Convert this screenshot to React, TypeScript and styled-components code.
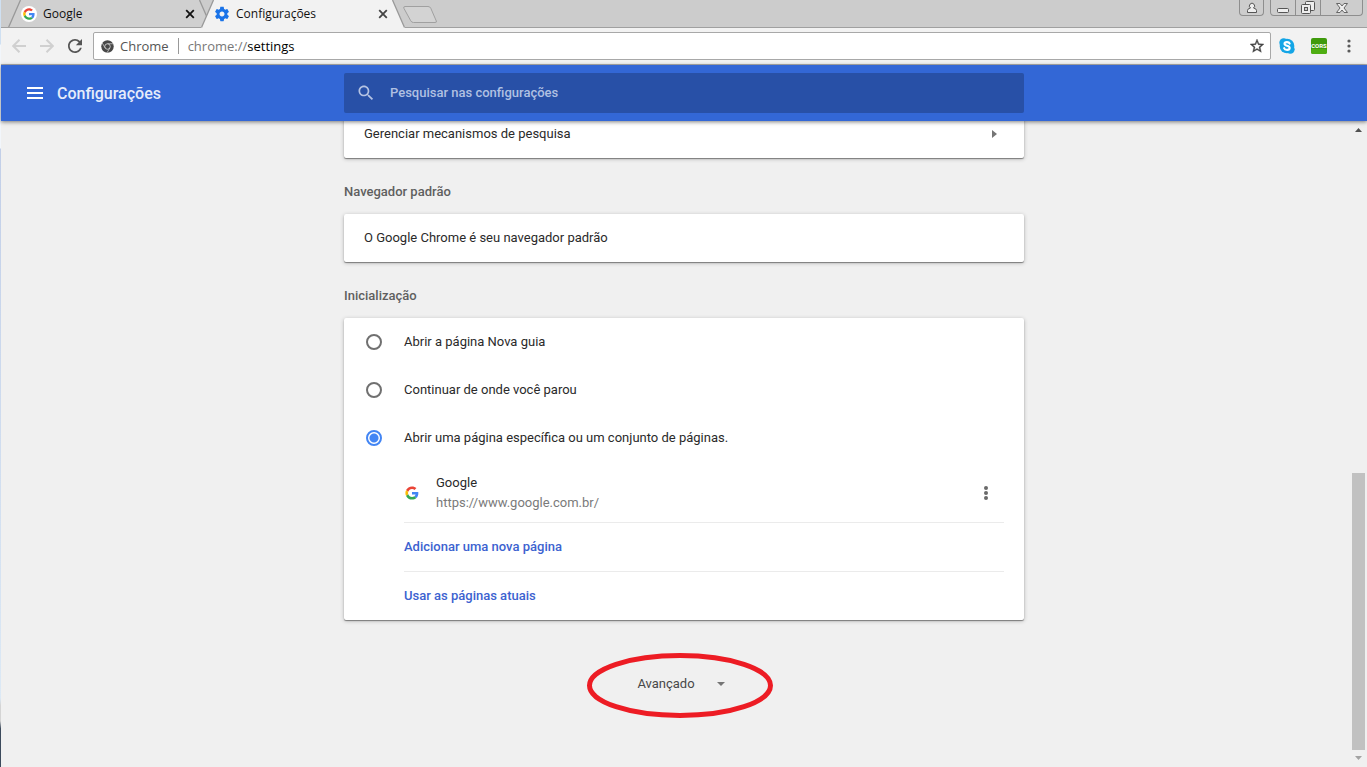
import React, { useState } from "react";
import styled, { createGlobalStyle } from "styled-components";

const GlobalStyle = createGlobalStyle`
  * { box-sizing: border-box; }
  html, body { margin: 0; padding: 0; }
  body { background: #f0f0f0; font-family: Roboto, "Liberation Sans", sans-serif; font-size: 13px; line-height: 16px; color: #2a2a2a; overflow: hidden; }
  button, input { font: inherit; color: inherit; }
`;

const uiFont = `"Open Sans", "Noto Sans", sans-serif`;

const Desktop = styled.div`
  display: flex;
  height: 100vh;
`;

const DesktopEdge = styled.div`
  flex: 0 0 1px;
  background: linear-gradient(#cfe0f2 0, #cfe0f2 44px, #f2f6fb 45px, #f2f6fb 148px, #c2cfe8 149px, #dce9f5 91%, #d4d4d4 92%, #d4d4d4 94%, #3c4a5c 95%);
`;

const Window = styled.div`
  flex: 1;
  min-width: 0;
  display: flex;
  flex-direction: column;
`;

const TabStrip = styled.div`
  display: flex;
  flex: none;
  height: 28px;
  padding-left: 7px;
  background: #ccc;
  box-shadow: inset 0 -1px #a0a0a0;
  font-family: ${uiFont};
  font-size: 12px;
  color: #111;
`;

const TabFrame = styled.div<{ $active?: boolean }>`
  position: relative;
  z-index: ${(p) => (p.$active ? 2 : 1)};
  display: flex;
  align-items: center;
  width: 204px;
  padding: 0 16px 0 13px;
  & + & { margin-left: -11px; }
`;

const TabShape = styled.svg`
  position: absolute;
  inset: 0;
  z-index: -1;
`;

const TabTitle = styled.span`
  flex: 1;
  margin-left: 6px;
`;

const IconButton = styled.button<{ $w: number; $h?: number }>`
  display: flex;
  flex: none;
  align-items: center;
  justify-content: center;
  width: ${(p) => p.$w}px;
  height: ${(p) => p.$h ?? 20}px;
  padding: 0;
  border: 0;
  background: none;
`;

const NewTab = styled(IconButton)`
  margin-left: -3px;
  height: 28px;
`;

const WindowControls = styled.div`
  display: flex;
  height: 16px;
  margin-left: auto;
  padding-right: 4px;
`;

const Control = styled.button<{ $w: number; $first?: boolean; $last?: boolean }>`
  display: flex;
  align-items: center;
  justify-content: center;
  width: ${(p) => p.$w}px;
  padding: 0;
  border: solid #8e8e8e;
  border-width: 0 1px 1px ${(p) => (p.$first ? "1px" : "0")};
  border-radius: 0 0 ${(p) => (p.$last ? "4px" : "0")} ${(p) => (p.$first ? "4px" : "0")};
  background: #cdcdcd;
`;

const ControlGroup = styled.div`
  display: flex;
  margin-left: 6px;
`;

const Toolbar = styled.div`
  display: flex;
  flex: none;
  align-items: center;
  gap: 8px;
  height: 37px;
  padding: 0 12px 0 8px;
  background: #f2f2f2;
  border-bottom: 1px solid #b0b0b0;
`;

const Omnibox = styled.div`
  display: flex;
  flex: 1;
  align-items: center;
  height: 28px;
  padding: 0 5px 0 7px;
  background: #fff;
  border: 1px solid #a8a8a8;
  border-radius: 2px;
  font-family: ${uiFont};
  font-size: 13px;
  color: #777;
`;

const SiteName = styled.span`
  margin-left: 6px;
  padding-right: 9px;
  border-right: 1px solid #999;
  color: #555;
`;

const Scheme = styled.label`
  margin-left: 9px;
`;

const AddressInput = styled.input`
  flex: 1;
  min-width: 0;
  padding: 0;
  border: 0;
  outline: 0;
  background: none;
  color: #000;
`;

const Extensions = styled.div`
  display: flex;
  gap: 16px;
  margin-right: 8px;
`;

const Header = styled.header`
  position: relative;
  z-index: 3;
  display: grid;
  grid-template-columns: 1fr minmax(0, 680px) 1fr;
  align-items: center;
  flex: none;
  height: 56px;
  background: #3367d6;
  color: #fff;
  box-shadow: 0 1px 4px rgba(0, 0, 0, 0.5);
`;

const HeaderTitle = styled.div`
  display: flex;
  align-items: center;
  gap: 12px;
  padding-left: 24px;
`;

const PageTitle = styled.h1`
  margin: 0;
  padding-top: 2px;
  font-size: 16px;
  font-weight: 500;
  line-height: 20px;
  color: #e6ecfa;
`;

const SearchBox = styled.label`
  display: flex;
  align-items: center;
  gap: 14px;
  height: 40px;
  padding: 0 12px;
  border-radius: 2px;
  background: #2850a7;
`;

const SearchInput = styled.input`
  flex: 1;
  height: 16px;
  padding: 0;
  border: 0;
  outline: 0;
  background: none;
  font-weight: 500;
  &::placeholder { color: #b0c0e2; opacity: 1; }
`;

const Main = styled.main`
  display: grid;
  grid-template-columns: 1fr minmax(0, 680px) 1fr;
  flex: 1;
  min-height: 0;
  overflow: hidden;
`;

const Column = styled.div`
  grid-column: 2;
  margin-top: -11px;
`;

const Card = styled.section`
  border-radius: 2px;
  background: #fff;
  box-shadow: 0 1px 1px rgba(0, 0, 0, 0.4), 0 1px 4px rgba(0, 0, 0, 0.24);
`;

const SectionTitle = styled.h2`
  margin: 0;
  padding: 25px 0 13px;
  font-size: 13px;
  font-weight: 500;
  line-height: 18px;
  color: #5f5f5f;
`;

const Row = styled.div`
  display: flex;
  align-items: center;
  height: 48px;
  padding: 0 20px;
`;

const LinkRow = styled.button`
  display: flex;
  align-items: center;
  justify-content: space-between;
  width: 100%;
  height: 48px;
  padding: 0 20px;
  border: 0;
  background: none;
`;

const RadioRow = styled.label`
  display: flex;
  align-items: center;
  gap: 20px;
  height: 48px;
  padding: 0 20px;
`;

const Radio = styled.input`
  appearance: none;
  width: 16px;
  height: 16px;
  margin: 0 2px;
  border: 2px solid #707070;
  border-radius: 50%;
  &:checked {
    border-color: #4285f4;
    background: radial-gradient(circle, #4285f4 4px, #fff 5px);
  }
`;

const StartupPages = styled.div`
  margin: 0 20px 0 60px;
`;

const PageRow = styled.div`
  display: flex;
  align-items: center;
  gap: 16px;
  height: 60px;
  padding-top: 2px;
`;

const PageInfo = styled.div`
  flex: 1;
  line-height: 20px;
`;

const Url = styled.div`
  color: #7a7a7a;
`;

const ActionRow = styled.div`
  display: flex;
  align-items: center;
  height: 49px;
  border-top: 1px solid #ebebeb;
`;

const Action = styled.button`
  padding: 0;
  border: 0;
  background: none;
  font-weight: 500;
  color: #3c62d0;
`;

const AdvancedArea = styled.div`
  position: relative;
  display: flex;
  justify-content: center;
  padding-top: 40px;
`;

const AdvancedButton = styled.button`
  display: flex;
  align-items: center;
  gap: 16px;
  height: 48px;
  padding: 0;
  border: 0;
  background: none;
  color: #484848;
`;

const Highlight = styled.svg`
  position: absolute;
  top: 32px;
  left: calc(50% - 98px);
  pointer-events: none;
`;

const ScrollBar = styled.div`
  grid-column: 3;
  justify-self: end;
  display: flex;
  flex-direction: column;
  align-items: center;
  width: 17px;
  padding: 1px 0;
`;

const ScrollThumb = styled.div`
  width: 13px;
  height: 43%;
  margin-top: auto;
  background: #c1c1c1;
`;

const GoogleG = ({ size, disc }: { size: number; disc?: boolean }) => (
  <svg width={size} height={size} viewBox={disc ? "-9 -9 66 66" : "-5 -5 58 58"} aria-hidden="true">
    {disc && <circle cx="24" cy="24" r="33" fill="#fff" />}
    <path fill="#EA4335" d="M24 9.5c3.54 0 6.71 1.22 9.21 3.6l6.85-6.85C35.9 2.38 30.47 0 24 0 14.62 0 6.51 5.38 2.56 13.22l7.98 6.19C12.43 13.72 17.74 9.5 24 9.5z" />
    <path fill="#4285F4" d="M46.98 24.55c0-1.57-.15-3.09-.38-4.55H24v9.02h12.94c-.58 2.96-2.26 5.48-4.78 7.18l7.73 6c4.51-4.18 7.09-10.36 7.09-17.65z" />
    <path fill="#FBBC05" d="M10.53 28.59c-.48-1.45-.76-2.99-.76-4.59s.27-3.14.76-4.59l-7.98-6.19C.92 16.46 0 20.12 0 24c0 3.88.92 7.54 2.56 10.78l7.97-6.19z" />
    <path fill="#34A853" d="M24 48c6.48 0 11.93-2.13 15.89-5.81l-7.73-6c-2.15 1.45-4.92 2.3-8.16 2.3-6.26 0-11.57-4.22-13.47-9.91l-7.98 6.19C6.51 42.62 14.62 48 24 48z" />
  </svg>
);

const Gear = () => (
  <svg width="16" height="16" viewBox="0.8 0.8 22.4 22.4" aria-hidden="true">
    <path fill="#1a73e8" d="M19.43 12.98c.04-.32.07-.64.07-.98s-.03-.66-.07-.98l2.11-1.65c.19-.15.24-.42.12-.64l-2-3.46c-.12-.22-.39-.3-.61-.22l-2.49 1c-.52-.4-1.08-.73-1.69-.98l-.38-2.65C14.46 2.18 14.25 2 14 2h-4c-.25 0-.46.18-.49.42l-.38 2.65c-.61.25-1.17.59-1.69.98l-2.49-1c-.23-.09-.49 0-.61.22l-2 3.46c-.13.22-.07.49.12.64l2.11 1.65c-.04.32-.07.65-.07.98s.03.66.07.98l-2.11 1.65c-.19.15-.24.42-.12.64l2 3.46c.12.22.39.3.61.22l2.49-1c.52.4 1.08.73 1.69.98l.38 2.65c.03.24.24.42.49.42h4c.25 0 .46-.18.49-.42l.38-2.65c.61-.25 1.17-.59 1.69-.98l2.49 1c.23.09.49 0 .61-.22l2-3.46c.12-.22.07-.49-.12-.64l-2.11-1.65zM12 15.5c-1.93 0-3.5-1.57-3.5-3.5s1.57-3.5 3.5-3.5 3.5 1.57 3.5 3.5-1.57 3.5-3.5 3.5z" />
  </svg>
);

const Dots = ({ color, r = 2 }: { color: string; r?: number }) => (
  <svg width="6" height="16" viewBox="0 0 6 16" fill={color} aria-hidden="true">
    <circle cx="3" cy="3" r={r} />
    <circle cx="3" cy="8" r={r} />
    <circle cx="3" cy="13" r={r} />
  </svg>
);

const Triangle = ({ w, h, points, color }: { w: number; h: number; points: string; color: string }) => (
  <svg width={w} height={h} viewBox={`0 0 ${w} ${h}`} aria-hidden="true">
    <polygon points={points} fill={color} />
  </svg>
);

function Tab({ title, icon, active }: { title: string; icon: React.ReactNode; active?: boolean }) {
  return (
    <TabFrame $active={active}>
      <TabShape width="204" height="28" viewBox="0 0 204 28" aria-hidden="true">
        <path d="M0 28 L12.500 0 H191.500 L204 28 Z" fill={active ? "#f2f2f2" : "#d0d0d0"} />
        <path d="M0.500 27.500 L12.500 0 M191.500 0 L203.500 27.500" stroke="#999" strokeWidth="1.300" fill="none" />
        {!active && <path d="M0 27.500 H204" stroke="#a0a0a0" />}
      </TabShape>
      {icon}
      <TabTitle>{title}</TabTitle>
      <IconButton $w={12} $h={12} aria-label={`Fechar ${title}`}>
        <svg width="10" height="10" viewBox="0 0 10 10" aria-hidden="true">
          <path d="M1.200 1.200 L8.800 8.800 M8.800 1.200 L1.200 8.800" stroke={active ? "#444" : "#111"} strokeWidth="1.800" />
        </svg>
      </IconButton>
    </TabFrame>
  );
}

const options = [
  "Abrir a página Nova guia",
  "Continuar de onde você parou",
  "Abrir uma página específica ou um conjunto de páginas.",
];

export default function App() {
  const [selected, setSelected] = useState(2);
  return (
    <Desktop>
      <GlobalStyle />
      <DesktopEdge />
      <Window>
        <TabStrip>
          <Tab title="Google" icon={<GoogleG size={16} disc />} />
          <Tab title="Configurações" icon={<Gear />} active />
          <NewTab $w={36} aria-label="Nova guia">
            <svg width="36" height="28" viewBox="0 0 36 28" aria-hidden="true">
              <path d="M3 6.500 H26 Q28 6.500 28.800 8.300 L34.300 21 Q35 22.500 33 22.500 H11.500 Q9.500 22.500 8.700 20.700 L2 8.500 Q1 6.500 3 6.500 Z" fill="#d3d3d3" stroke="#a0a0a0" />
            </svg>
          </NewTab>
          <WindowControls>
            <Control $w={25} $first $last aria-label="Perfil">
              <svg width="12" height="12" viewBox="0 0 12 12" fill="#eee" stroke="#555" aria-hidden="true">
                <path d="M1.500 10.500 V8.500 Q1.500 6.500 4.500 6 A2.600 2.600 0 1 1 7.500 6 Q10.500 6.500 10.500 8.500 V10.500 Z" />
              </svg>
            </Control>
            <ControlGroup>
              <Control $w={26} $first aria-label="Minimizar">
                <svg width="14" height="12" viewBox="0 0 14 12" aria-hidden="true">
                  <rect x="1.500" y="6.500" width="11" height="4" rx="1" fill="#eee" stroke="#555" />
                </svg>
              </Control>
              <Control $w={25} aria-label="Restaurar">
                <svg width="14" height="14" viewBox="0 0 14 14" fill="#eee" stroke="#555" aria-hidden="true">
                  <rect x="4.500" y="0.500" width="9" height="9" rx="1" />
                  <rect x="0.500" y="3.500" width="9" height="9" rx="1" />
                  <rect x="3.500" y="6.500" width="3" height="3" fill="#ccc" />
                </svg>
              </Control>
              <Control $w={42} $last aria-label="Fechar">
                <svg width="12" height="12" viewBox="0 0 12 12" aria-hidden="true">
                  <path d="M.5 1.500 H4 L6 4 L8 1.500 H11.500 L8 6 L11.500 10.500 H8 L6 8 L4 10.500 H.5 L4 6 Z" fill="#eee" stroke="#666" />
                </svg>
              </Control>
            </ControlGroup>
          </WindowControls>
        </TabStrip>

        <Toolbar>
          <IconButton $w={20} aria-label="Voltar">
            <svg width="14" height="14" viewBox="0 0 14 14" fill="none" stroke="#d0d0d0" strokeWidth="2" aria-hidden="true">
              <path d="M14 7 H1.500 M7.500 .7 L1.200 7 L7.500 13.300" />
            </svg>
          </IconButton>
          <IconButton $w={20} aria-label="Avançar">
            <svg width="14" height="14" viewBox="0 0 14 14" fill="none" stroke="#d0d0d0" strokeWidth="2" aria-hidden="true">
              <path d="M0 7 H12.500 M6.500 .7 L12.800 7 L6.500 13.300" />
            </svg>
          </IconButton>
          <IconButton $w={20} aria-label="Recarregar">
            <svg width="14" height="14" viewBox="4 4 16 16" aria-hidden="true">
              <path fill="#555" d="M17.650 6.350C16.200 4.900 14.210 4 12 4c-4.420 0-7.990 3.580-7.990 8s3.570 8 7.990 8c3.730 0 6.840-2.550 7.730-6h-2.080c-.82 2.330-3.040 4-5.650 4-3.310 0-6-2.690-6-6s2.690-6 6-6c1.660 0 3.140.69 4.220 1.780L13 11h7V4l-2.350 2.350z" />
            </svg>
          </IconButton>
          <Omnibox>
            <svg width="13" height="13" viewBox="0 0 26 26" aria-hidden="true">
              <circle cx="13" cy="13" r="12.500" fill="#484848" />
              <circle cx="13" cy="13" r="5.500" fill="#484848" stroke="#ddd" strokeWidth="1.600" />
              <path d="M13 7.500 H24.500 M8.200 15.800 L2.500 6 M17.800 15.800 L12 25.500" stroke="#ddd" strokeWidth="1.400" />
            </svg>
            <SiteName>Chrome</SiteName>
            <Scheme htmlFor="address">chrome://</Scheme>
            <AddressInput id="address" defaultValue="settings" />
            <IconButton $w={16} aria-label="Adicionar aos favoritos">
              <svg width="14" height="14" viewBox="2 2 20 20" aria-hidden="true">
                <path fill="#444" stroke="#444" strokeWidth=".5" d="M22 9.240l-7.190-.62L12 2 9.190 8.630 2 9.240l5.460 4.730L5.820 21 12 17.270 18.180 21l-1.630-7.030L22 9.240zM12 15.400l-3.760 2.270 1-4.280-3.320-2.880 4.380-.38L12 6.100l1.710 4.040 4.380.38-3.320 2.880 1 4.280L12 15.400z" />
              </svg>
            </IconButton>
          </Omnibox>
          <Extensions>
            <IconButton $w={16} aria-label="Skype">
              <svg width="16" height="16" viewBox="0 0 24 24" aria-hidden="true">
                <circle cx="12" cy="12" r="11" fill="#14a5e6" />
                <circle cx="7" cy="7" r="6.500" fill="#14a5e6" />
                <circle cx="17" cy="17" r="6.500" fill="#14a5e6" />
                <path d="M16 8.300 C15 5.500 8.300 5.300 8.300 8.800 C8.300 12.600 16 10.800 16 15 C16 18.800 8.700 18.600 7.700 15.300" fill="none" stroke="#fff" strokeWidth="3.200" strokeLinecap="round" />
              </svg>
            </IconButton>
            <IconButton $w={16} aria-label="Extensão CORS">
              <svg width="16" height="16" viewBox="0 0 16 16" aria-hidden="true">
                <rect width="16" height="16" rx="2" fill="#3f9a0c" />
                <rect y="11" width="16" height="5" rx="2" fill="#4fae12" />
                <text x="8" y="10" textAnchor="middle" fontSize="6" fontWeight="700" fontFamily="'Liberation Sans Narrow', Roboto, sans-serif" fill="#fff">CORS</text>
              </svg>
            </IconButton>
          </Extensions>
          <IconButton $w={12} aria-label="Menu">
            <Dots color="#5a5a5a" r={1.6} />
          </IconButton>
        </Toolbar>

        <Header>
          <HeaderTitle>
            <IconButton $w={20} aria-label="Menu principal">
              <svg width="16" height="12" viewBox="0 0 16 12" aria-hidden="true">
                <path d="M0 1 H16 M0 6 H16 M0 11 H16" stroke="#fff" strokeWidth="2" />
              </svg>
            </IconButton>
            <PageTitle>Configurações</PageTitle>
          </HeaderTitle>
          <SearchBox>
            <svg width="20" height="20" viewBox="0 0 24 24" aria-hidden="true">
              <path fill="#b5c3e3" d="M15.500 14h-.79l-.28-.27C15.410 12.590 16 11.110 16 9.500 16 5.910 13.090 3 9.500 3S3 5.910 3 9.500 5.910 16 9.500 16c1.610 0 3.090-.59 4.230-1.570l.27.28v.79l5 4.990L20.490 19l-4.990-5zm-6 0C7.010 14 5 11.990 5 9.500S7.010 5 9.500 5 14 7.010 14 9.500 11.990 14 9.500 14z" />
            </svg>
            <SearchInput type="search" aria-label="Pesquisar nas configurações" placeholder="Pesquisar nas configurações" />
          </SearchBox>
        </Header>

        <Main>
          <Column>
            <Card>
              <LinkRow>
                Gerenciar mecanismos de pesquisa
                <Triangle w={20} h={20} points="8,6 13,10 8,14" color="#757575" />
              </LinkRow>
            </Card>
            <SectionTitle>Navegador padrão</SectionTitle>
            <Card>
              <Row>O Google Chrome é seu navegador padrão</Row>
            </Card>
            <SectionTitle>Inicialização</SectionTitle>
            <Card>
              {options.map((text, i) => (
                <RadioRow key={text}>
                  <Radio type="radio" name="startup" checked={selected === i} onChange={() => setSelected(i)} />
                  {text}
                </RadioRow>
              ))}
              <StartupPages>
                <PageRow>
                  <GoogleG size={16} />
                  <PageInfo>
                    <div>Google</div>
                    <Url>https://www.google.com.br/</Url>
                  </PageInfo>
                  <IconButton $w={36} aria-label="Mais ações">
                    <Dots color="#6a6a6a" />
                  </IconButton>
                </PageRow>
                <ActionRow>
                  <Action>Adicionar uma nova página</Action>
                </ActionRow>
                <ActionRow>
                  <Action>Usar as páginas atuais</Action>
                </ActionRow>
              </StartupPages>
            </Card>
            <AdvancedArea>
              <AdvancedButton>
                Avançado
                <Triangle w={20} h={20} points="6,8 14,8 10,12" color="#757575" />
              </AdvancedButton>
              <Highlight width="188" height="68" viewBox="0 0 188 68" aria-hidden="true">
                <ellipse cx="94" cy="33.500" rx="90.500" ry="30" fill="none" stroke="#ed1c24" strokeWidth="5" />
              </Highlight>
            </AdvancedArea>
          </Column>
          <ScrollBar>
            <Triangle w={17} h={16} points="5,10 8.500,6 12,10" color="#505050" />
            <ScrollThumb />
            <Triangle w={17} h={16} points="5,6 8.500,10 12,6" color="#a3a3a3" />
          </ScrollBar>
        </Main>
      </Window>
    </Desktop>
  );
}
